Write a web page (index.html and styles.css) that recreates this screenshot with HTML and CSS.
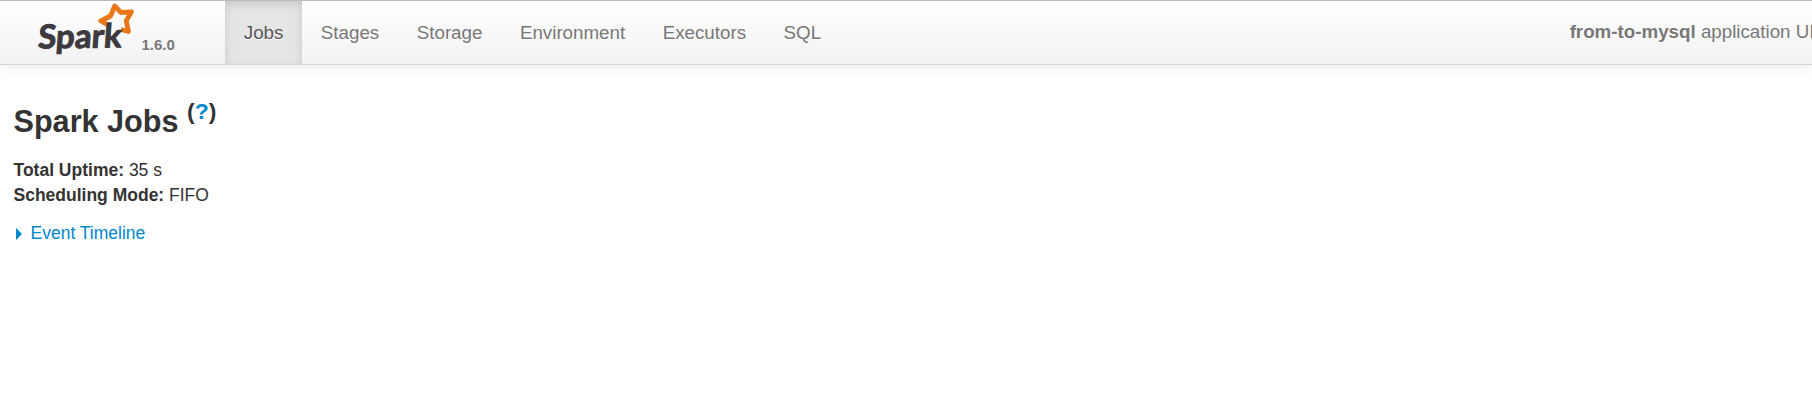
FILE: index.html
```html
<!DOCTYPE html>
<html lang="en">
<head>
<meta charset="utf-8">
<title>Spark Jobs</title>
<link rel="stylesheet" href="styles.css">
</head>
<body>
<header class="navbar">
  <a class="brand">
    <svg class="logo" width="100" height="56" viewBox="0 0 100 56" role="img" aria-label="Spark">
      <path class="star" d="M84 28.5 L91.5 30.5 L89.2 19.7 L94.5 10.8 L84 11.5 L77.7 5 L73.5 15 L63.8 20 L72 24.5"/>
      <g transform="translate(0.5 47.6) rotate(-1) skewX(-5)">
        <text class="wordmark" x="0" y="0" textLength="83.5" lengthAdjust="spacingAndGlyphs">Spark</text>
      </g>
    </svg>
    <span class="version">1.6.0</span>
  </a>
  <nav class="nav">
    <a class="tab active">Jobs</a>
    <a class="tab">Stages</a>
    <a class="tab">Storage</a>
    <a class="tab">Environment</a>
    <a class="tab">Executors</a>
    <a class="tab">SQL</a>
  </nav>
  <p class="app-name"><strong>from-to-mysql</strong> application UI</p>
</header>
<main class="content">
  <h3 class="title">Spark Jobs <sup class="help">(<a class="link">?</a>)</sup></h3>
  <ul class="summary">
    <li><strong>Total Uptime:</strong> 35 s</li>
    <li><strong>Scheduling Mode:</strong> FIFO</li>
  </ul>
  <a class="timeline link"><span class="arrow"></span>Event Timeline</a>
</main>
</body>
</html>
```
FILE: styles.css
```css
body {
  margin: 0;
  overflow: hidden;
  background: #fff;
  color: #333;
  font: 17.5px/25px "Liberation Sans", Arial, sans-serif;
}
.navbar {
  display: flex;
  box-sizing: border-box;
  height: 65px;
  border-top: 1px solid #bbb;
  border-bottom: 1px solid #d4d4d4;
  background: linear-gradient(#fff, #f2f2f2);
  box-shadow: 0 1px 12.5px rgba(0, 0, 0, .1);
  color: #777;
  font-size: 18.75px;
  text-shadow: 0 1px 0 #fff;
}
.brand {
  display: flex;
  flex: none;
  box-sizing: border-box;
  width: 225px;
  padding-left: 37px;
}
.logo {
  flex: none;
  overflow: visible;
}
.wordmark {
  fill: #3c3a3e;
  stroke: #3c3a3e;
  stroke-width: 1;
  font: 700 33px Lato, sans-serif;
  text-shadow: none;
}
.star {
  fill: none;
  stroke: #e87817;
  stroke-width: 4.8;
  stroke-linejoin: round;
}
.version {
  padding: 31px 0 0 4.5px;
  font-size: 15px;
  font-weight: 700;
}
.nav {
  display: flex;
}
.tab {
  padding: 19px 18.75px 0;
}
.active {
  background: #e5e5e5;
  box-shadow: inset 0 3.75px 10px rgba(0, 0, 0, .125);
  color: #555;
}
.app-name {
  flex: none;
  margin: 18px -2.5px 0 auto;
  white-space: nowrap;
}
.content {
  padding: 31px 13px 0 13.5px;
}
.title {
  margin: 0;
  font-size: 30.625px;
  line-height: 50px;
}
.help {
  position: relative;
  top: -.55em;
  font-size: 75%;
  line-height: 0;
  vertical-align: baseline;
}
.link {
  color: #08c;
}
.summary {
  margin: 12px 0 13px;
  padding: 0;
  list-style: none;
}
.timeline {
  display: flex;
  align-items: center;
}
.arrow {
  width: 0;
  margin: 0 8.5px 0 2.5px;
  border: solid transparent;
  border-width: 6px 0 6px 6px;
  border-left-color: #08c;
}
```
